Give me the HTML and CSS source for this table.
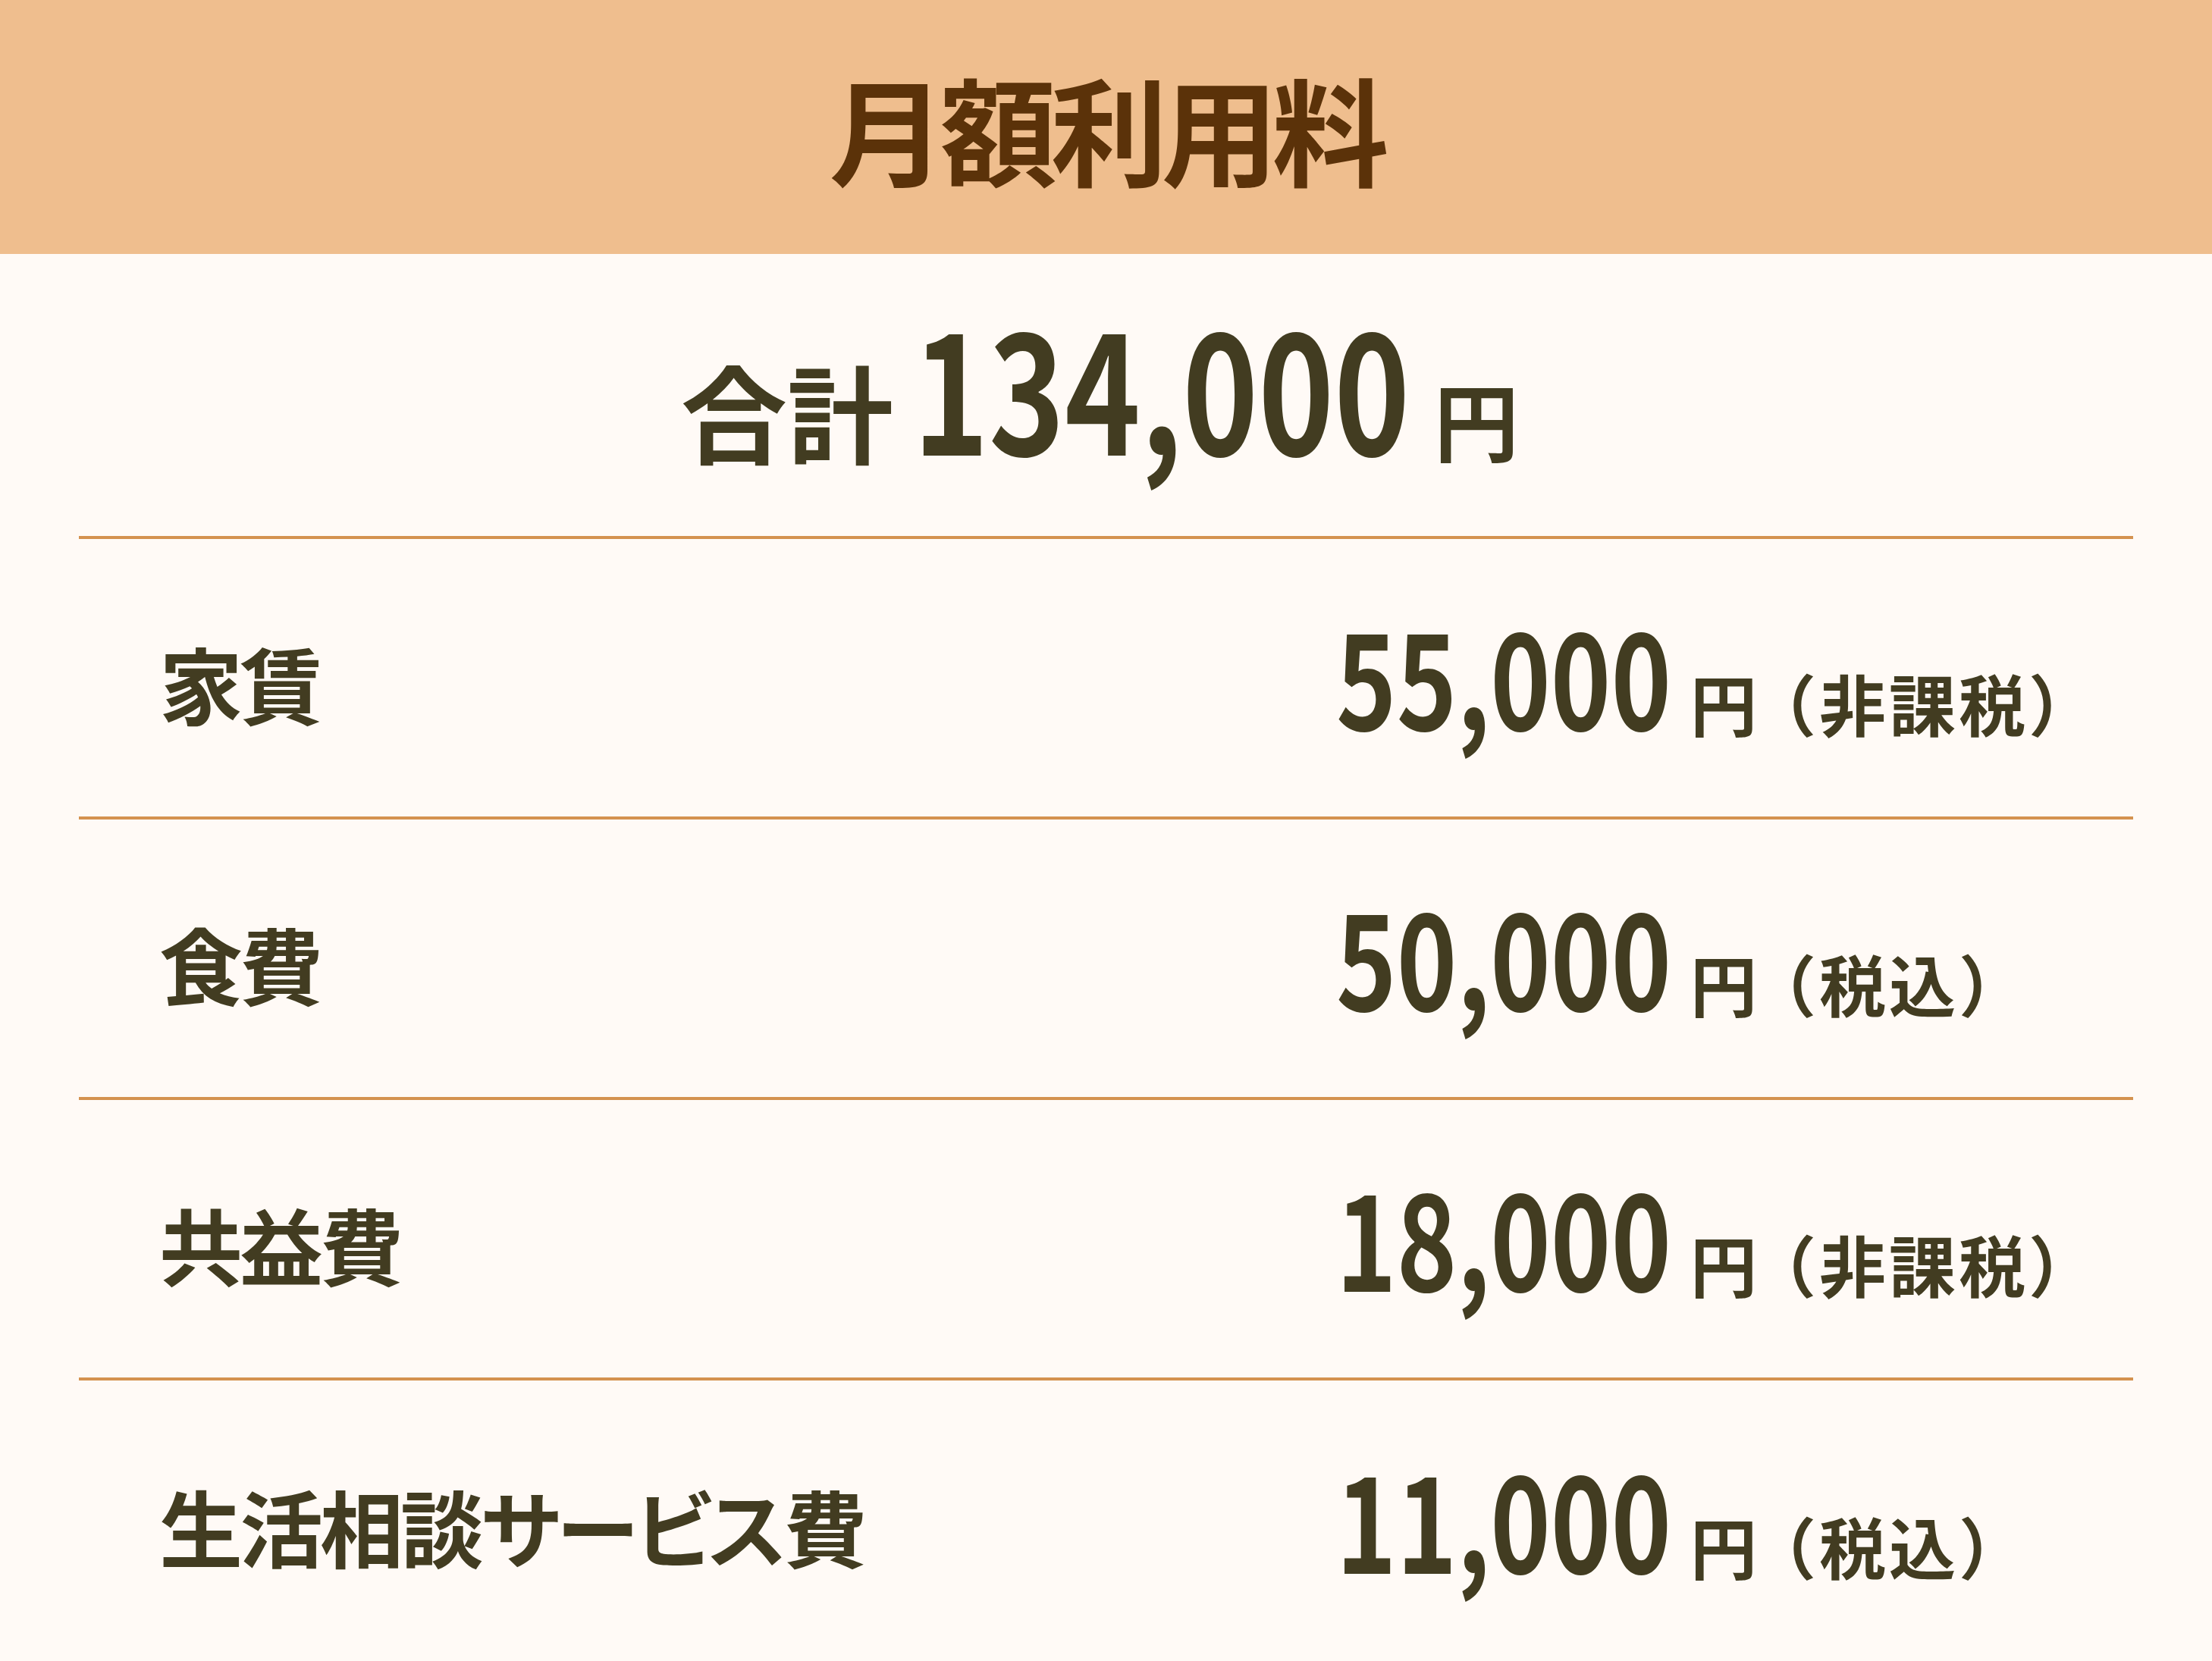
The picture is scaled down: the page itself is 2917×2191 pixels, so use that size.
FILE: index.html
```html
<!DOCTYPE html>
<html lang="ja">
<head>
<meta charset="utf-8">
<title>月額利用料</title>
<link rel="stylesheet" href="styles.css">
</head>
<body>
<header class="header">
  <h1 class="title">月額利用料</h1>
</header>
<section class="total">
  <div class="total-inner">
    <span class="total-label">合計</span>
    <span class="total-num"><span class="cond">134,000</span></span>
    <span class="total-yen">円</span>
  </div>
</section>
<div class="list">
  <div class="row">
    <div class="label">家賃</div>
    <div class="value"><span class="amount"><span class="cond">55,000</span></span><span class="unit">円</span><span class="note">（非課税）</span></div>
  </div>
  <div class="row">
    <div class="label">食費</div>
    <div class="value"><span class="amount"><span class="cond">50,000</span></span><span class="unit">円</span><span class="note">（税込）</span></div>
  </div>
  <div class="row">
    <div class="label">共益費</div>
    <div class="value"><span class="amount"><span class="cond">18,000</span></span><span class="unit">円</span><span class="note">（非課税）</span></div>
  </div>
  <div class="row">
    <div class="label">生活相談サービス費</div>
    <div class="value"><span class="amount"><span class="cond">11,000</span></span><span class="unit">円</span><span class="note">（税込）</span></div>
  </div>
</div>
</body>
</html>
```

FILE: styles.css
```css
html, body {
  margin: 0;
  padding: 0;
}

body {
  width: 2917px;
  height: 2191px;
  overflow: hidden;
  background: #FFFAF6;
  color: #423C21;
  font-family: "Noto Sans CJK JP", "Noto Sans", sans-serif;
  font-weight: 700;
}

.header {
  height: 335px;
  background: #EFBE8E;
  display: flex;
  align-items: center;
  justify-content: center;
}

.title {
  margin: 0;
  font-size: 154px;
  line-height: 1;
  letter-spacing: -8px;
  font-weight: 700;
  color: #5B3209;
}

.total {
  height: 372px;
  display: flex;
  align-items: center;
  justify-content: center;
}

.total-inner {
  display: flex;
  align-items: baseline;
  padding-bottom: 28px;
  padding-right: 16px;
}

.total-label {
  font-size: 140px;
  line-height: 1;
}

.total-num {
  font-size: 216px;
  line-height: 1;
  width: 687px;
  margin-left: 26px;
}

.total-yen {
  font-size: 112px;
  line-height: 1;
}

.cond {
  display: inline-block;
  transform: scaleX(0.785);
  transform-origin: left center;
  white-space: nowrap;
}

.list {
  margin: 0 104px;
}

.row {
  height: 366px;
  border-top: 4px solid #D4924F;
  display: grid;
  grid-template-columns: 1552px auto;
  align-items: center;
  padding-left: 106px;
}

.row:last-child {
  height: 370px;
}

.label {
  font-size: 110px;
  line-height: 1;
  padding-top: 12px;
  letter-spacing: -4px;
  font-feature-settings: "palt";
}

.value {
  display: flex;
  align-items: baseline;
  padding-bottom: 10px;
}

.amount {
  font-size: 172px;
  line-height: 1;
  width: 467px;
}

.unit {
  font-size: 88px;
  line-height: 1;
  letter-spacing: -10px;
}

.note {
  font-size: 88px;
  line-height: 1;
  letter-spacing: 4px;
}
```
